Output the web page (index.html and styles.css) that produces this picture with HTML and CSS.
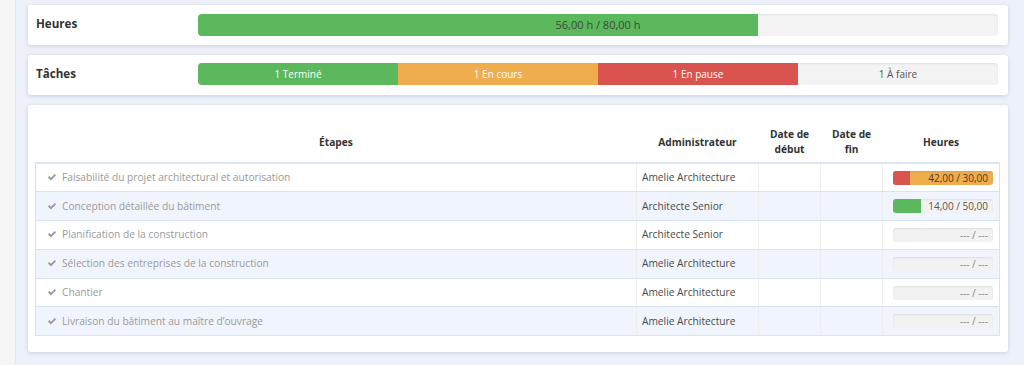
FILE: index.html
```html
<!DOCTYPE html>
<html lang="fr">
  <head>
    <meta charset="UTF-8" />
    <meta name="viewport" content="width=device-width, initial-scale=1.0" />
    <title>Suivi du projet</title>
    <link rel="stylesheet" href="styles.css">
  </head>
  <body>
    <div class="sidebar"></div>
    <div class="main">
      <div class="card card_row">
        <h3 class="card_title">Heures</h3>
        <div class="progress">
          <div class="progress_bar bar_green" style="width: 70%"></div>
          <span class="progress_label">56,00 h / 80,00 h</span>
        </div>
      </div>

      <div class="card card_row">
        <h3 class="card_title">Tâches</h3>
        <div class="progress progress_tasks">
          <div class="seg bar_green">1 Terminé</div>
          <div class="seg bar_orange">1 En cours</div>
          <div class="seg bar_red">1 En pause</div>
          <div class="seg seg_todo">1 À faire</div>
        </div>
      </div>

      <div class="card card_table">
        <table class="steps">
          <thead>
            <tr>
              <th class="col_step">Étapes</th>
              <th class="col_admin">Administrateur</th>
              <th class="col_date">Date de début</th>
              <th class="col_date">Date de fin</th>
              <th class="col_hours">Heures</th>
            </tr>
          </thead>
          <tbody>
            <tr>
              <td class="step"><svg class="check" viewBox="0 0 16 16"><path d="M1.5 8.6 L3.6 6.5 L6.3 9.2 L12.4 3.1 L14.5 5.2 L6.3 13.4 Z"/></svg>Faisabilité du projet architectural et autorisation</td>
              <td>Amelie Architecture</td>
              <td></td>
              <td></td>
              <td class="hours">
                <div class="mini over">
                  <div class="mini_fill bar_red" style="width: 17%"></div>
                  <span class="mini_label">42,00 / 30,00</span>
                </div>
              </td>
            </tr>
            <tr>
              <td class="step"><svg class="check" viewBox="0 0 16 16"><path d="M1.5 8.6 L3.6 6.5 L6.3 9.2 L12.4 3.1 L14.5 5.2 L6.3 13.4 Z"/></svg>Conception détaillée du bâtiment</td>
              <td>Architecte Senior</td>
              <td></td>
              <td></td>
              <td class="hours">
                <div class="mini">
                  <div class="mini_fill bar_green" style="width: 28%"></div>
                  <span class="mini_label">14,00 / 50,00</span>
                </div>
              </td>
            </tr>
            <tr>
              <td class="step"><svg class="check" viewBox="0 0 16 16"><path d="M1.5 8.6 L3.6 6.5 L6.3 9.2 L12.4 3.1 L14.5 5.2 L6.3 13.4 Z"/></svg>Planification de la construction</td>
              <td>Architecte Senior</td>
              <td></td>
              <td></td>
              <td class="hours"><div class="mini"><span class="mini_label empty">--- / ---</span></div></td>
            </tr>
            <tr>
              <td class="step"><svg class="check" viewBox="0 0 16 16"><path d="M1.5 8.6 L3.6 6.5 L6.3 9.2 L12.4 3.1 L14.5 5.2 L6.3 13.4 Z"/></svg>Sélection des entreprises de la construction</td>
              <td>Amelie Architecture</td>
              <td></td>
              <td></td>
              <td class="hours"><div class="mini"><span class="mini_label empty">--- / ---</span></div></td>
            </tr>
            <tr>
              <td class="step"><svg class="check" viewBox="0 0 16 16"><path d="M1.5 8.6 L3.6 6.5 L6.3 9.2 L12.4 3.1 L14.5 5.2 L6.3 13.4 Z"/></svg>Chantier</td>
              <td>Amelie Architecture</td>
              <td></td>
              <td></td>
              <td class="hours"><div class="mini"><span class="mini_label empty">--- / ---</span></div></td>
            </tr>
            <tr>
              <td class="step"><svg class="check" viewBox="0 0 16 16"><path d="M1.5 8.6 L3.6 6.5 L6.3 9.2 L12.4 3.1 L14.5 5.2 L6.3 13.4 Z"/></svg>Livraison du bâtiment au maître d’ouvrage</td>
              <td>Amelie Architecture</td>
              <td></td>
              <td></td>
              <td class="hours"><div class="mini"><span class="mini_label empty">--- / ---</span></div></td>
            </tr>
          </tbody>
        </table>
      </div>
    </div>
  </body>
</html>
```

FILE: styles.css
```css
* {
  margin: 0;
  padding: 0;
  box-sizing: border-box;
}

body {
  display: flex;
  min-height: 365px;
  font-family: "Open Sans", Arial, sans-serif;
  font-size: 10.2px;
  color: #333;
  background-color: #edf1f9;
}

.sidebar {
  width: 16px;
  flex-shrink: 0;
  background-color: #f6f6f7;
  border-right: 1px solid #dfe5f3;
}

.main {
  flex: 1;
  padding: 5px 16px 0 12px;
}

.card {
  background-color: #fff;
  border-radius: 3px;
  box-shadow: 0 1px 4px rgba(40, 60, 110, 0.18);
  margin-bottom: 10px;
}

.card_row {
  display: flex;
  align-items: center;
  height: 40px;
  padding: 0 10px 0 8px;
}

.card_title {
  width: 162px;
  padding-bottom: 4px;
  font-size: 11.6px;
  font-weight: 700;
  color: #333;
}

.progress {
  position: relative;
  flex: 1;
  height: 22px;
  background-color: #f3f3f3;
  border-radius: 4px;
  overflow: hidden;
  box-shadow: inset 0 1px 2px rgba(0, 0, 0, 0.08);
}

.progress_bar {
  height: 100%;
}

.progress_label {
  position: absolute;
  inset: 0;
  text-align: center;
  line-height: 22px;
  font-size: 11px;
  color: #3a4a3a;
}

.progress_tasks {
  display: flex;
  margin-bottom: 3px;
}

.seg {
  flex: 1;
  text-align: center;
  line-height: 22px;
  font-size: 10px;
  color: #fff;
}

.seg_todo {
  color: #555;
}

.bar_green {
  background-color: #5cb85c;
}

.bar_orange {
  background-color: #f0ad4e;
}

.bar_red {
  background-color: #d9534f;
}

.card_table {
  padding: 13px 8px 16px 7px;
}

.steps {
  width: 100%;
  border-collapse: collapse;
}

.steps th {
  font-weight: 700;
  font-size: 10.2px;
  line-height: 15px;
  color: #333;
  text-align: center;
  vertical-align: middle;
  padding: 8px 4px 4px;
  height: 45px;
  border-bottom: 2px solid #dce5f7;
}

.col_step {
  width: 601px;
}

.col_admin {
  width: 122px;
}

.col_date {
  width: 62px;
}

.steps td {
  height: 28.8px;
  padding: 0 5px;
  line-height: 15px;
  color: #4a4a4a;
  border: 1px solid #eeeeee;
  border-top: 1px solid #d8e2f6;
  border-bottom: 1px solid #d8e2f6;
  vertical-align: middle;
}

.steps td:first-child {
  border-left: 1px solid #d8e2f6;
}

.steps td:last-child {
  border-right: 1px solid #d8e2f6;
}

.steps tbody tr:nth-child(even) td {
  background-color: #f0f5fd;
}

.steps .step {
  color: #9a9a9a;
  padding-left: 11px;
}

.check {
  width: 10px;
  height: 10px;
  margin-right: 5px;
  vertical-align: -1px;
  fill: #9a9a9a;
}

.steps .hours {
  padding: 0 6px 0 10px;
}

.mini {
  position: relative;
  height: 14px;
  background-color: #f2f2f2;
  border-radius: 3px;
  overflow: hidden;
  box-shadow: inset 0 1px 2px rgba(0, 0, 0, 0.08);
}

.mini.over {
  background-color: #f0ad4e;
}

.mini_fill {
  height: 100%;
}

.mini_label {
  position: absolute;
  top: 0;
  right: 5px;
  line-height: 14px;
  font-size: 10px;
  color: #555;
}

.mini.over .mini_label {
  color: #4a3a20;
}

.mini_label.empty {
  color: #888;
}
```
